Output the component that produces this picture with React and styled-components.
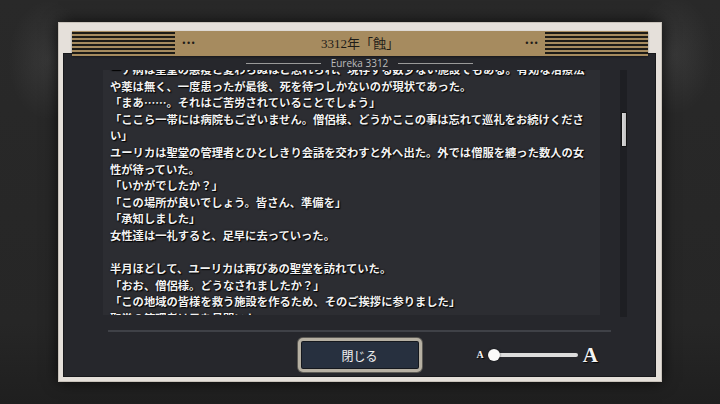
import React from 'react'
import styled, { createGlobalStyle } from 'styled-components'

const GlobalStyle = createGlobalStyle`
  html, body {
    margin: 0;
    height: 100%;
  }
  body {
    background: #252525;
    font-family: "Liberation Serif", "Noto Sans CJK JP", serif;
  }
  #root {
    height: 100%;
  }
`

const lines = [
  'ーナ病は聖堂の悪疫と変わらぬほど恐れられ、現存する数少ない施設でもある。有効な治療法',
  'や薬は無く、一度患ったが最後、死を待つしかないのが現状であった。',
  '「まあ……。それはご苦労されていることでしょう」',
  '「ここら一帯には病院もございません。僧侶様、どうかここの事は忘れて巡礼をお続けくださ',
  'い」',
  'ユーリカは聖堂の管理者とひとしきり会話を交わすと外へ出た。外では僧服を纏った数人の女',
  '性が待っていた。',
  '「いかがでしたか？」',
  '「この場所が良いでしょう。皆さん、準備を」',
  '「承知しました」',
  '女性達は一礼すると、足早に去っていった。',
  '',
  '半月ほどして、ユーリカは再びあの聖堂を訪れていた。',
  '「おお、僧侶様。どうなされましたか？」',
  '「この地域の皆様を救う施設を作るため、そのご挨拶に参りました」',
  '聖堂の管理者は目を見開いた。',
  '「それは……本当でございますか」',
]

const Stage = styled.div`
  height: 100%;
  display: flex;
  align-items: center;
  justify-content: center;
  background:
    radial-gradient(ellipse 40px 60px at 48px 60px, rgba(255, 255, 255, 0.07), transparent),
    radial-gradient(ellipse 40px 60px at 674px 55px, rgba(255, 255, 255, 0.07), transparent),
    linear-gradient(to bottom, #292929 0%, #262626 80%, #1f1f1f 100%);
`

const Frame = styled.div`
  width: 604px;
  height: 360px;
  box-sizing: border-box;
  background: #e5e0da;
  border: 1px solid #c8c2ba;
  padding: 8px 5px 4px 4px;
  display: flex;
  flex-direction: column;
  box-shadow: 0 0 14px rgba(0, 0, 0, 0.7);
`

const Header = styled.div`
  position: relative;
  z-index: 1;
  height: 25px;
  margin: 0 8px 0 9px;
  background: #a68b5f;
  display: flex;
  align-items: center;
  box-shadow: 0 1px 2px rgba(0, 0, 0, 0.4);
`

const Stripes = styled.div`
  width: 103px;
  align-self: stretch;
  background: repeating-linear-gradient(
    to bottom,
    transparent 0 1px,
    #1d1b17 1px 3px,
    transparent 3px 4px
  );
`

const Dots = styled.span`
  width: 15px;
  margin: 0 6px;
  font-family: "DejaVu Sans", sans-serif;
  font-size: 8px;
  letter-spacing: 0;
  color: #1d1b17;
  text-align: center;
`

const Title = styled.div`
  flex: 1;
  text-align: center;
  font-size: 13px;
  color: #1e1c18;
  margin-top: -2px;
`

const Panel = styled.div`
  position: relative;
  flex: 1;
  margin-top: -3px;
  background: #26272c;
  border: 1px solid #18191c;
  display: flex;
  flex-direction: column;
`

const Subtitle = styled.div`
  height: 14px;
  padding-top: 2px;
  display: flex;
  align-items: center;
  justify-content: center;
  gap: 10px;
  font-family: "Open Sans", "Liberation Sans", sans-serif;
  font-size: 10px;
  color: #bdbdbd;

  &::before,
  &::after {
    content: '';
    width: 75px;
    height: 1px;
    background: #9a9a9a;
  }
`

const Body = styled.div`
  height: 245px;
  display: flex;
  padding-left: 39px;
  gap: 17px;
`

const TextBox = styled.div`
  width: 497px;
  overflow: hidden;
  background: #2c2d32;
  padding-left: 7px;
  box-sizing: border-box;
`

const Scroll = styled.div`
  margin-top: -9px;
  font-family: "Noto Sans CJK JP", sans-serif;
  font-size: 11.3px;
  font-weight: 700;
  line-height: 16.6px;
  color: #f2f2f2;
  text-shadow: 1px 1px 1px #000, 0 0 2px rgba(0, 0, 0, 0.8);
  white-space: nowrap;
`

const Line = styled.div`
  height: 16.6px;
`

const Track = styled.div`
  position: relative;
  width: 13px;
  margin-bottom: -2px;
  background: linear-gradient(to right, transparent 0 3px, #1e1f23 3px 10px, transparent 10px);
`

const Thumb = styled.div`
  position: absolute;
  left: 4px;
  top: 42px;
  width: 4px;
  height: 33px;
  background: linear-gradient(to right, #d9d9d9, #bdbdbd);
  border: 1px solid #111;
  border-radius: 1px;
`

const Rule = styled.div`
  height: 2px;
  margin: 15px 44px 6px 44px;
  background: #3f4147;
`

const Footer = styled.div`
  display: grid;
  grid-template-columns: 1fr auto 1fr;
  align-items: center;
`

const CloseButton = styled.button`
  grid-column: 2;
  width: 124px;
  height: 34px;
  box-sizing: border-box;
  border: 3px solid #b6b0a3;
  border-radius: 5px;
  background: #27303f;
  box-shadow: inset 0 0 0 1px #15181e, 0 0 0 1px #5c5a55;
  color: #f1f1f1;
  font-family: "Noto Sans CJK JP", sans-serif;
  font-size: 12px;
  cursor: pointer;
`

const SizeSlider = styled.div`
  display: flex;
  align-items: center;
  margin-left: 55px;
`

const Glyph = styled.span`
  font-family: "Liberation Serif", serif;
  font-weight: 700;
  font-size: ${p => p.size}px;
  color: #f5f5f5;
  text-shadow: 1px 1px 1px #000;
  line-height: 1;
`

const Rail = styled.div`
  position: relative;
  width: 84px;
  height: 4px;
  margin: 0 5px 0 10px;
  border-radius: 2px;
  background: #dcdcdc;
`

const Knob = styled.div`
  position: absolute;
  left: -6px;
  top: -4px;
  width: 12px;
  height: 12px;
  border-radius: 50%;
  background: #fafafa;
  box-shadow: 0 0 2px rgba(0, 0, 0, 0.6);
`

const App = () => {
  return (
    <>
      <GlobalStyle />
      <Stage>
        <Frame>
          <Header>
            <Stripes />
            <Dots>•••</Dots>
            <Title>3312年「蝕」</Title>
            <Dots>•••</Dots>
            <Stripes />
          </Header>
          <Panel>
            <Subtitle>Eureka 3312</Subtitle>
            <Body>
              <TextBox>
                <Scroll>
                  {lines.map((line, i) => (
                    <Line key={i}>{line}</Line>
                  ))}
                </Scroll>
              </TextBox>
              <Track>
                <Thumb />
              </Track>
            </Body>
            <Rule />
            <Footer>
              <CloseButton>閉じる</CloseButton>
              <SizeSlider>
                <Glyph size={10}>A</Glyph>
                <Rail>
                  <Knob />
                </Rail>
                <Glyph size={21}>A</Glyph>
              </SizeSlider>
            </Footer>
          </Panel>
        </Frame>
      </Stage>
    </>
  )
}

export default App
